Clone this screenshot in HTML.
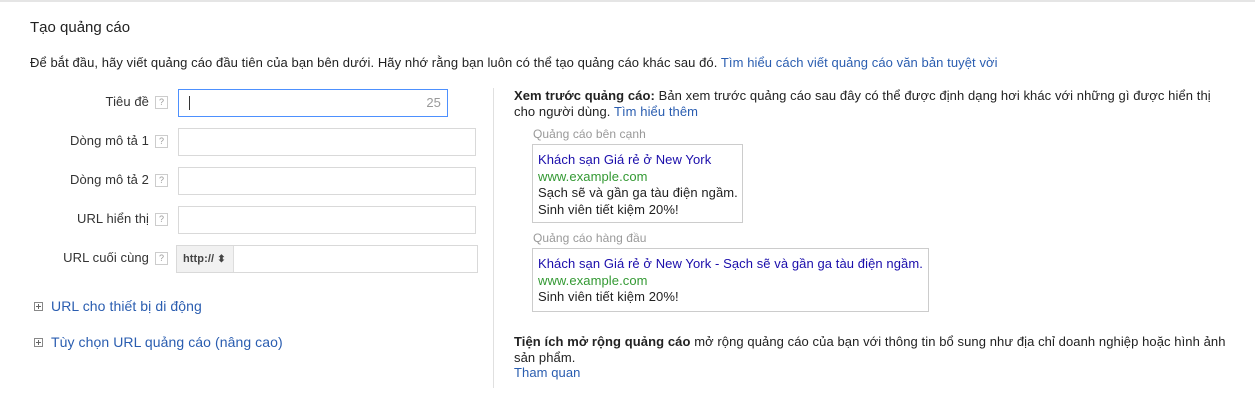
<!DOCTYPE html>
<html><head><meta charset="utf-8"><style>
body{margin:0;width:1255px;height:418px;background:#fff;font-family:"Liberation Sans",Arial,sans-serif;font-size:13px;color:#222;position:relative;overflow:hidden;letter-spacing:0.08px}
.a{position:absolute;white-space:nowrap;line-height:16px}
.lnk{color:#2a5db0}
.lbl{position:absolute;right:1106px;white-space:nowrap;line-height:16px;color:#333}
.q{position:absolute;left:155px;width:11px;height:11px;border:1px solid #ccc;color:#999;font-size:9px;line-height:11px;text-align:center;letter-spacing:0}
.in{position:absolute;left:178px;width:298px;height:28px;border:1px solid #d9d9d9;box-sizing:border-box}
.pl{position:absolute;width:9px;height:9px;border:1px solid #888;box-sizing:border-box}
.pl:before{content:"";position:absolute;left:1px;top:3px;width:5px;height:1px;background:#666}
.pl:after{content:"";position:absolute;left:3px;top:1px;width:1px;height:5px;background:#666}
.box{position:absolute;border:1px solid #ccc;box-sizing:border-box;padding:7px 0 0 5px}
.box div{line-height:16.5px;white-space:nowrap}
.bl{color:#1a0dab}.gr{color:#393}
</style></head><body>
<div style="position:absolute;left:0;top:0;width:1255px;height:2px;background:#e5e5e5"></div>
<div class="a" style="left:30px;top:19px;font-size:15px;line-height:18px;letter-spacing:0">Tạo quảng cáo</div>
<div class="a" style="left:30px;top:55px">Để bắt đầu, hãy viết quảng cáo đầu tiên của bạn bên dưới. Hãy nhớ rằng bạn luôn có thể tạo quảng cáo khác sau đó. <span class="lnk">Tìm hiểu cách viết quảng cáo văn bản tuyệt vời</span></div>

<div class="lbl" style="top:94px">Tiêu đề</div><div class="q" style="top:96px">?</div>
<div class="in" style="top:89px;width:270px;border-color:#4d90fe"><div style="position:absolute;left:10px;top:6px;width:1px;height:14px;background:#333"></div><div style="position:absolute;right:6px;top:5px;color:#999">25</div></div>
<div class="lbl" style="top:133px">Dòng mô tả 1</div><div class="q" style="top:135px">?</div><div class="in" style="top:128px"></div>
<div class="lbl" style="top:172px">Dòng mô tả 2</div><div class="q" style="top:174px">?</div><div class="in" style="top:167px"></div>
<div class="lbl" style="top:211px">URL hiển thị</div><div class="q" style="top:213px">?</div><div class="in" style="top:206px"></div>
<div class="lbl" style="top:250px">URL cuối cùng</div><div class="q" style="top:252px">?</div>
<div class="in" style="top:245px;left:176px;width:302px"><div style="position:absolute;left:0;top:0;width:57px;height:26px;background:#f1f1f1;border-right:1px solid #ddd;font-size:11px;font-weight:bold;color:#444;line-height:26px;padding-left:6px;box-sizing:border-box">http:// <span style="font-size:10px">&#x2B0D;</span></div></div>

<div class="pl" style="left:34px;top:302px"></div><div class="a lnk" style="left:51px;top:298px;font-size:14px">URL cho thiết bị di động</div>
<div class="pl" style="left:34px;top:338px"></div><div class="a lnk" style="left:51px;top:334px;font-size:14px">Tùy chọn URL quảng cáo (nâng cao)</div>

<div style="position:absolute;left:493px;top:88px;width:1px;height:300px;background:#e0e0e0"></div>
<div class="a" style="left:514px;top:88px;line-height:15.5px">
<b>Xem trước quảng cáo:</b> Bản xem trước quảng cáo sau đây có thể được định dạng hơi khác với những gì được hiển thị<br>cho người dùng. <span class="lnk">Tìm hiểu thêm</span></div>
<div class="a" style="left:533px;top:126px;color:#999;font-size:12px">Quảng cáo bên cạnh</div>
<div class="box" style="left:532px;top:144px;width:211px;height:79px"><div class="bl">Khách sạn Giá rẻ ở New York</div><div class="gr">www.example.com</div><div>Sạch sẽ và gần ga tàu điện ngầm.</div><div>Sinh viên tiết kiệm 20%!</div></div>
<div class="a" style="left:533px;top:230px;color:#999;font-size:12px">Quảng cáo hàng đầu</div>
<div class="box" style="left:532px;top:248px;width:397px;height:64px"><div class="bl">Khách sạn Giá rẻ ở New York - Sạch sẽ và gần ga tàu điện ngầm.</div><div class="gr">www.example.com</div><div>Sinh viên tiết kiệm 20%!</div></div>
<div class="a" style="left:514px;top:334px;line-height:15.5px"><b>Tiện ích mở rộng quảng cáo</b> mở rộng quảng cáo của bạn với thông tin bổ sung như địa chỉ doanh nghiệp hoặc hình ảnh<br>sản phẩm.<br><span class="lnk">Tham quan</span></div>
</body></html>
